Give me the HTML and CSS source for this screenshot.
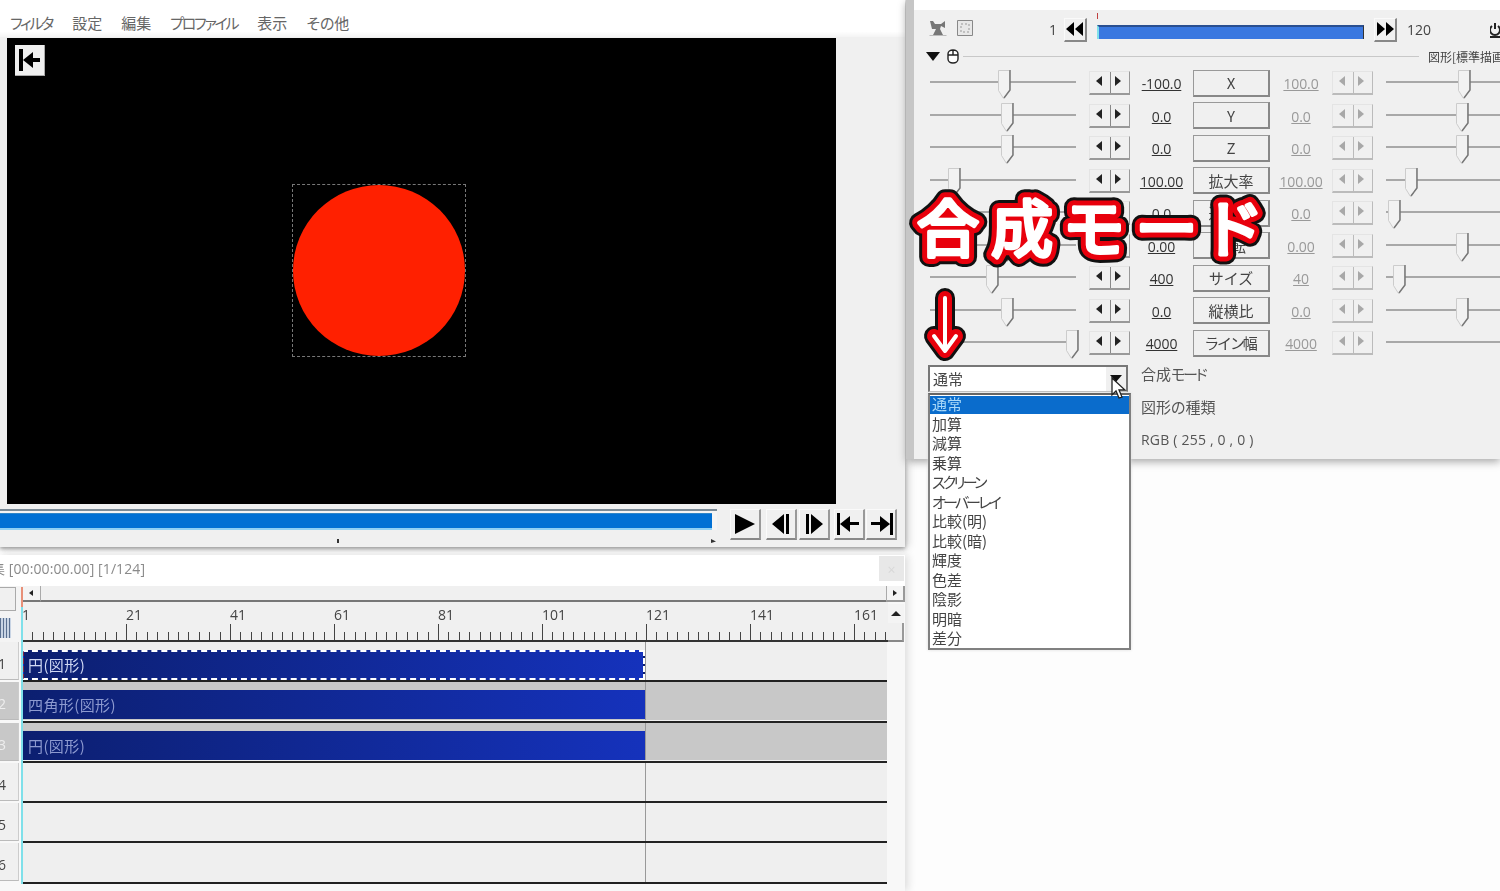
FILE: index.html
```html
<!DOCTYPE html>
<html lang="ja">
<head>
  <meta charset="UTF-8">
  <title>AviUtl 合成モード</title>
  <link rel="stylesheet" href="styles.css">
</head>
<body>
  <!-- main window -->
  <div class="main-win">
    <div class="menu">
      <span class="kana">フィルタ</span><span>設定</span><span>編集</span><span class="kana">プロファイル</span><span>表示</span><span>その他</span>
    </div>
    <div class="preview">
      <button class="jump-btn">
        <svg width="22" height="22" viewBox="0 0 22 22"><path d="M0 0h4v22H0zM4 11l10-8v6h7v4h-7v6z"/></svg>
      </button>
      <div class="select-box"><div class="circle"></div></div>
    </div>
    <div class="transport">
      <div class="seek"><div class="seek-fill"></div></div>
      <div class="play-btns">
        <button class="t-btn play"><svg width="22" height="22" viewBox="0 0 22 22"><path d="M1 1l20 10L1 21z"/></svg></button>
        <button class="t-btn"><svg width="22" height="22" viewBox="0 0 22 22"><path d="M14 1v20L2 11zM16 1h3v20h-3z"/></svg></button>
        <button class="t-btn"><svg width="22" height="22" viewBox="0 0 22 22"><path d="M8 1v20l12-10zM3 1h3v20H3z"/></svg></button>
        <button class="t-btn first"><svg width="24" height="22" viewBox="0 0 24 22"><path d="M0 0h3v22H0zM3 11l10-8v6h9v3h-9v7z"/></svg></button>
        <button class="t-btn last"><svg width="24" height="22" viewBox="0 0 24 22"><path d="M21 0h3v22h-3zM21 11L11 3v6H2v3h9v7z"/></svg></button>
      </div>
    </div>
    <i class="seek-mark mark-a"></i>
    <i class="seek-mark mark-b"></i>
  </div>

  <!-- timeline window -->
  <div class="tl-win">
    <div class="tl-title">
      <span class="tl-title-text">集 [00:00:00.00] [1/124]</span>
      <span class="tl-close">×</span>
    </div>
    <div class="tl-grid">
      <div class="corner">
        <div class="corner-btn"></div>
        <div class="corner-bars"></div>
      </div>
      <div class="hscroll">
        <div class="scroll-btn"><i class="tri-l"></i></div>
        <div class="hscroll-track"></div>
        <div class="scroll-btn end"><i class="tri-r"></i></div>
      </div>
      <div class="ruler">
        <div class="ruler-nums">
          <span>1</span><span>21</span><span>41</span><span>61</span><span>81</span><span>101</span><span>121</span><span>141</span><span>161</span>
        </div>
      </div>
      <div class="vscroll">
        <div class="vscroll-btn"><i class="tri-u"></i></div>
        <div class="vscroll-thumb"></div>
      </div>
      <div class="layers">
        <div class="layer">
          <div class="layer-num">1</div>
          <div class="track"><div class="clip selected">円(図形)</div></div>
        </div>
        <div class="layer off">
          <div class="layer-num">2</div>
          <div class="track"><div class="clip">四角形(図形)</div></div>
        </div>
        <div class="layer off">
          <div class="layer-num">3</div>
          <div class="track"><div class="clip">円(図形)</div></div>
        </div>
        <div class="layer">
          <div class="layer-num">4</div>
          <div class="track"></div>
        </div>
        <div class="layer">
          <div class="layer-num">5</div>
          <div class="track"></div>
        </div>
        <div class="layer">
          <div class="layer-num">6</div>
          <div class="track"></div>
        </div>
      </div>
      <i class="playhead"></i>
    </div>
  </div>

  <!-- settings window -->
  <div class="set-win">
    <div class="set-top"></div>
    <div class="set-frames">
      <div class="frame-icon">
        <svg width="18" height="18" viewBox="0 0 18 18"><path fill="#777" d="M1 2h3l2 3h6l4-3v7l-4-2-1 3 3 6H4l3-6H3z"/><path fill="none" stroke="#bbb" d="M.5 16.500h17"/></svg>
      </div>
      <div class="frame-icon second">
        <svg width="18" height="18" viewBox="0 0 18 18"><path fill="#e8e8e8" stroke="#888" d="M1.500 1.500h15v15h-15z"/><path fill="none" stroke="#999" stroke-dasharray="2 2" d="M5 5h8v8H5z"/></svg>
      </div>
      <span class="frame-no">1</span>
      <button class="frame-btn"><svg width="18" height="14" viewBox="0 0 18 14"><path d="M8 0v14L0 7zM17 0v14L9 7z"/></svg></button>
      <div class="frame-bar"><i class="frame-head"></i></div>
      <button class="frame-btn"><svg width="18" height="14" viewBox="0 0 18 14"><path d="M1 0v14l8-7zM10 0v14l8-7z"/></svg></button>
      <span class="frame-end">120</span>
      <svg class="power-icon" width="10" height="16" viewBox="0 0 10 16"><path fill="none" stroke="#222" stroke-width="2" d="M5 1v6M2 4a5 5 0 1 0 6 0M0 15h10"/></svg>
    </div>
    <div class="set-group">
      <i class="tri-down"></i>
      <svg class="mouse-icon" width="12" height="15" viewBox="0 0 12 15"><path fill="#fff" stroke="#222" stroke-width="1.400" d="M1 5a5 4 0 0 1 10 0v5a5 4 0 0 1-10 0zM1 6h10M6 1v5"/></svg>
      <div class="group-line"></div>
      <span class="group-label">図形[標準描画]</span>
    </div>

    <div class="params">
      <div class="param">
        <div class="slider"><i class="thumb" style="left:68px"></i></div>
        <div class="spin"><i class="tri-l"></i><i class="tri-r"></i></div>
        <span class="val">-100.0</span>
        <button class="name-btn">X</button>
        <span class="val end">100.0</span>
        <div class="spin off"><i class="tri-l"></i><i class="tri-r"></i></div>
        <div class="slider right"><i class="thumb" style="left:72px"></i></div>
      </div>
      <div class="param">
        <div class="slider"><i class="thumb" style="left:71px"></i></div>
        <div class="spin"><i class="tri-l"></i><i class="tri-r"></i></div>
        <span class="val">0.0</span>
        <button class="name-btn">Y</button>
        <span class="val end">0.0</span>
        <div class="spin off"><i class="tri-l"></i><i class="tri-r"></i></div>
        <div class="slider right"><i class="thumb" style="left:70px"></i></div>
      </div>
      <div class="param">
        <div class="slider"><i class="thumb" style="left:71px"></i></div>
        <div class="spin"><i class="tri-l"></i><i class="tri-r"></i></div>
        <span class="val">0.0</span>
        <button class="name-btn">Z</button>
        <span class="val end">0.0</span>
        <div class="spin off"><i class="tri-l"></i><i class="tri-r"></i></div>
        <div class="slider right"><i class="thumb" style="left:70px"></i></div>
      </div>
      <div class="param">
        <div class="slider"><i class="thumb" style="left:18px"></i></div>
        <div class="spin"><i class="tri-l"></i><i class="tri-r"></i></div>
        <span class="val">100.00</span>
        <button class="name-btn">拡大率</button>
        <span class="val end">100.00</span>
        <div class="spin off"><i class="tri-l"></i><i class="tri-r"></i></div>
        <div class="slider right"><i class="thumb" style="left:19px"></i></div>
      </div>
      <div class="param">
        <div class="slider"><i class="thumb" style="left:1px"></i></div>
        <div class="spin"><i class="tri-l"></i><i class="tri-r"></i></div>
        <span class="val">0.0</span>
        <button class="name-btn">透明度</button>
        <span class="val end">0.0</span>
        <div class="spin off"><i class="tri-l"></i><i class="tri-r"></i></div>
        <div class="slider right"><i class="thumb" style="left:2px"></i></div>
      </div>
      <div class="param">
        <div class="slider"><i class="thumb" style="left:71px"></i></div>
        <div class="spin"><i class="tri-l"></i><i class="tri-r"></i></div>
        <span class="val">0.00</span>
        <button class="name-btn">回転</button>
        <span class="val end">0.00</span>
        <div class="spin off"><i class="tri-l"></i><i class="tri-r"></i></div>
        <div class="slider right"><i class="thumb" style="left:70px"></i></div>
      </div>
      <div class="param">
        <div class="slider"><i class="thumb" style="left:56px"></i></div>
        <div class="spin"><i class="tri-l"></i><i class="tri-r"></i></div>
        <span class="val">400</span>
        <button class="name-btn">サイズ</button>
        <span class="val end">40</span>
        <div class="spin off"><i class="tri-l"></i><i class="tri-r"></i></div>
        <div class="slider right"><i class="thumb" style="left:7px"></i></div>
      </div>
      <div class="param">
        <div class="slider"><i class="thumb" style="left:71px"></i></div>
        <div class="spin"><i class="tri-l"></i><i class="tri-r"></i></div>
        <span class="val">0.0</span>
        <button class="name-btn">縦横比</button>
        <span class="val end">0.0</span>
        <div class="spin off"><i class="tri-l"></i><i class="tri-r"></i></div>
        <div class="slider right"><i class="thumb" style="left:70px"></i></div>
      </div>
      <div class="param">
        <div class="slider"><i class="thumb" style="left:136px"></i></div>
        <div class="spin"><i class="tri-l"></i><i class="tri-r"></i></div>
        <span class="val">4000</span>
        <button class="name-btn"><span class="kana">ライン</span>幅</button>
        <span class="val end">4000</span>
        <div class="spin off"><i class="tri-l"></i><i class="tri-r"></i></div>
        <div class="slider right"></div>
      </div>
    </div>

    <div class="combo-area">
      <div class="combo">
        <span>通常</span>
        <div class="combo-btn"><i class="tri-down small"></i></div>
      </div>
      <div class="combo-labels">
        <div>合成<span class="kana">モード</span></div>
        <div>図形の種類</div>
        <div class="rgb">RGB ( 255 , 0 , 0 )</div>
      </div>
    </div>
  </div>

  <!-- opened dropdown -->
  <ul class="drop-list">
    <li class="on">通常</li>
    <li>加算</li>
    <li>減算</li>
    <li>乗算</li>
    <li class="kana">スクリーン</li>
    <li class="kana">オーバーレイ</li>
    <li>比較(明)</li>
    <li>比較(暗)</li>
    <li>輝度</li>
    <li>色差</li>
    <li>陰影</li>
    <li>明暗</li>
    <li>差分</li>
  </ul>

  <svg class="cursor" width="18" height="24" viewBox="0 0 18 24"><path fill="#fff" stroke="#222" stroke-width="1.300" d="M1 1v17l4-4 3 7 3-1-3-7h6z"/></svg>

  <!-- annotation over the screenshot -->
  <svg class="note" width="400" height="190" viewBox="0 0 400 190">
    <defs>
      <text id="note-text" x="12" y="67" class="note-text">合成モード</text>
      <path id="note-arrow" d="M40 113v53M29 151l11 15 11-15"/>
    </defs>
    <use href="#note-text" class="s-black"/>
    <use href="#note-arrow" class="s-black"/>
    <use href="#note-text" class="s-red"/>
    <use href="#note-arrow" class="s-red"/>
    <use href="#note-text" class="s-white"/>
    <use href="#note-arrow" class="s-white"/>
  </svg>
</body>
</html>
```

FILE: styles.css
```css
* {
  box-sizing: border-box;
}
html, body {
  margin: 0;
  height: 100%;
}
body {
  position: relative;
  width: 1500px;
  height: 891px;
  overflow: hidden;
  background-color: #fdfdfd;
  font-family: "Noto Sans CJK JP", "Open Sans", sans-serif;
  font-feature-settings: "palt";
  font-size: 15px;
  color: #444;
  filter: blur(0.35px);
}
button {
  font-family: inherit;
  padding: 0;
}
i {
  display: block;
}
.kana {
  letter-spacing: -2.2px;
}

/* triangles */
.tri-l, .tri-r {
  width: 0;
  height: 0;
  border-top: 5px solid transparent;
  border-bottom: 5px solid transparent;
}
.tri-l {
  border-right: 6px solid #222;
}
.tri-r {
  border-left: 6px solid #222;
}
.tri-u {
  width: 0;
  height: 0;
  border-left: 5px solid transparent;
  border-right: 5px solid transparent;
  border-bottom: 5px solid #222;
}
.tri-down {
  flex: none;
  width: 0;
  height: 0;
  border-left: 7px solid transparent;
  border-right: 7px solid transparent;
  border-top: 9px solid #111;
}
.tri-down.small {
  border-left-width: 6px;
  border-right-width: 6px;
  border-top-width: 7px;
}

/* main window */
.main-win {
  position: absolute;
  left: 0;
  top: 0;
  width: 905px;
  height: 547px;
  background-color: #f0f0f0;
  box-shadow: 0 2px 4px #999, 3px 0 8px #ccc;
}
.menu {
  display: flex;
  gap: 19px;
  height: 37px;
  padding: 10px 0 0 10px;
  background-color: #fff;
  background-image: linear-gradient(to bottom, #fff 85%, #f4f4f4);
  color: #666;
  line-height: 26px;
}
.menu .kana {
  margin-right: 1px;
}
.preview {
  position: relative;
  display: flex;
  align-items: center;
  width: 829px;
  height: 466px;
  margin: 1px 0 0 7px;
  padding: 0 0 1px 285px;
  background-color: #000;
}
.jump-btn {
  position: absolute;
  left: 8px;
  top: 7px;
  display: flex;
  align-items: center;
  justify-content: center;
  width: 30px;
  height: 31px;
  background-color: #f0f0f0;
  border: 0;
  border-right: 1px solid #aaa;
  border-bottom: 1px solid #aaa;
}
.select-box {
  width: 174px;
  height: 173px;
  border: 1px dashed #777;
}
.circle {
  width: 172px;
  height: 171px;
  border-radius: 50%;
  background-color: #ff2000;
}
.transport {
  display: flex;
  margin-top: 5px;
}
.seek {
  width: 717px;
  height: 21px;
  padding: 2px 5px 2px 0;
  background-color: #f4f4f4;
  border-top: 2px solid #7a8a96;
}
.seek-fill {
  height: 17px;
  background-color: #0070d4;
  border-bottom: 2px solid #8fd0f4;
  border-top: 1px solid #2f86c8;
}
.play-btns {
  display: flex;
  gap: 2px;
  margin-left: 13px;
}
.t-btn {
  display: flex;
  align-items: center;
  justify-content: center;
  width: 31px;
  height: 31px;
  background-color: #f0f0f0;
  border: 1px solid #fafafa;
  border-right: 2px solid #999;
  border-bottom: 2px solid #888;
}
.t-btn.play {
  margin-right: 3px;
}
.t-btn.first {
  margin-left: 2px;
}
.t-btn.last {
  margin-left: -1px;
}
.seek-mark {
  position: absolute;
  top: 539px;
  width: 2px;
  height: 4px;
  background-color: #333;
}
.mark-a {
  left: 337px;
}
.mark-b {
  left: 711px;
  clip-path: polygon(0 0, 100% 60%, 0 100%);
  width: 5px;
}

/* timeline window */
.tl-win {
  position: absolute;
  left: 0;
  top: 555px;
  width: 905px;
  height: 336px;
  overflow: hidden;
  background-color: #f8f8f8;
  box-shadow: 3px 0 8px #ddd;
}
.tl-title {
  display: flex;
  justify-content: space-between;
  height: 31px;
  padding-right: 1px;
  background-color: #fff;
  color: #8a8a8a;
  line-height: 27px;
  font-family: "Open Sans", "Noto Sans CJK JP", sans-serif;
  font-size: 14px;
  letter-spacing: 0.1px;
}
.tl-title-text {
  margin-left: -9px;
}
.tl-close {
  width: 25px;
  height: 25px;
  margin-top: 1px;
  background-color: #e8e8e8;
  color: #d8d8d8;
  text-align: center;
}
.tl-grid {
  position: relative;
  display: grid;
  grid-template-columns: 22px 866px 17px;
  grid-template-rows: 16px 40px auto;
}
.corner {
  grid-column: 1;
  grid-row: 1 / 3;
  background-color: #f4f4f4;
}
.corner-btn {
  width: 16px;
  height: 24px;
  margin-top: 1px;
  background-color: #f0f0f0;
  border: 1px solid #aaa;
  border-left: 0;
}
.corner-bars {
  width: 11px;
  height: 20px;
  margin-top: 7px;
  background-image: repeating-linear-gradient(to right, #5a7090 0 1px, #c8d4e4 1px 3px);
}
.hscroll {
  grid-column: 2 / 4;
  grid-row: 1;
  display: flex;
  background-color: #f8f8f8;
}
.scroll-btn {
  display: flex;
  align-items: center;
  justify-content: center;
  width: 19px;
  background-color: #f4f4f4;
  border-right: 1px solid #aaa;
  border-bottom: 2px solid #777;
}
.scroll-btn.end {
  border-left: 1px solid #aaa;
  border-right: 2px solid #999;
  border-bottom: 2px solid #999;
}
.scroll-btn i {
  border-top-width: 3px;
  border-bottom-width: 3px;
  border-right-width: 4px;
  border-left-width: 4px;
}
.hscroll-track {
  flex: 1;
  background-color: #f0f0f0;
  border-bottom: 2px solid #777;
}
.ruler {
  grid-column: 2;
  grid-row: 2;
  width: 866px;
  overflow: hidden;
  background-color: #f0f0f0;
  background-image:
    linear-gradient(#333, #333),
    repeating-linear-gradient(to right, #444 0 1px, transparent 1px 104px),
    repeating-linear-gradient(to right, #444 0 1px, transparent 1px 10.4px);
  background-size: 100% 2px, 100% 16px, 100% 8px;
  background-position: 0 38px, 0 22px, 0 30px;
  background-repeat: no-repeat;
}
.ruler-nums {
  display: flex;
  padding-top: 3px;
  color: #444;
  font-family: "Open Sans", sans-serif;
  font-size: 14px;
  line-height: 20px;
}
.ruler-nums span {
  flex: 0 0 104px;
}
.vscroll {
  grid-column: 3;
  grid-row: 2 / 4;
  padding-top: 2px;
  margin-right: 1px;
}
.vscroll-btn {
  display: flex;
  align-items: center;
  justify-content: center;
  height: 19px;
  background-color: #f4f4f4;
}
.vscroll-thumb {
  height: 19px;
  background-color: #f0f0f0;
  border-right: 2px solid #999;
  border-bottom: 2px solid #888;
}
.layers {
  grid-column: 1 / 3;
  grid-row: 3;
}
.layer {
  display: flex;
  height: 40.3px;
}
.layer-num {
  width: 19px;
  height: 38px;
  margin-right: 3px;
  background-color: #f0f0f0;
  border-right: 1px solid #ccc;
  border-bottom: 1px solid #bbb;
  color: #444;
  font-family: "Open Sans", sans-serif;
  font-size: 14px;
  line-height: 43px;
  text-indent: -2px;
}
.off .layer-num {
  background-color: #c8c8c8;
  color: #eee;
}
.track {
  width: 865px;
  padding-top: 8px;
  background-color: #efefef;
  background-image: linear-gradient(#999, #999);
  background-size: 1px 100%;
  background-position: 623px 0;
  background-repeat: no-repeat;
  border-bottom: 2px solid #222;
}
.off .track {
  background-color: #c8c8c8;
  box-shadow: inset 0 -1px #f0f0f0;
}
.clip {
  width: 623px;
  height: 29px;
  padding-left: 6px;
  background-image: linear-gradient(to right, #0c1f70, #1532bc);
  color: #8d9ad0;
  letter-spacing: 0.4px;
  line-height: 30px;
}
.clip.selected {
  height: 30px;
  padding-left: 4px;
  border: 2px dashed #fff;
  border-left-color: #8a2a40;
  color: #d0d8f4;
  line-height: 26px;
}
.playhead {
  position: absolute;
  left: 21px;
  top: 1px;
  bottom: 0;
  width: 2px;
  background-image: linear-gradient(to bottom, #e89078 0 20px, #7fe0ea 20px);
}

/* settings window */
.set-win {
  position: absolute;
  left: 906px;
  top: 0;
  width: 594px;
  height: 459px;
  overflow: hidden;
  background-color: #f0f0f0;
  border-left: 8px solid #c6c6c6;
  box-shadow: 0 3px 8px #aaa;
}
.set-top {
  height: 10px;
  background-color: #fff;
}
.set-frames {
  display: flex;
  align-items: center;
  height: 36px;
  padding: 3px 0 0 15px;
}
.frame-icon.second {
  margin-left: 9px;
}
.frame-no {
  width: 10px;
  margin-left: 75px;
  font-family: "Open Sans", sans-serif;
  font-size: 14px;
}
.frame-btn {
  display: flex;
  align-items: center;
  justify-content: center;
  width: 23px;
  height: 24px;
  margin-left: 5px;
  background-color: #f0f0f0;
  border: 1px solid #fafafa;
  border-right: 2px solid #888;
  border-bottom: 2px solid #888;
}
.frame-bar {
  position: relative;
  width: 267px;
  height: 14px;
  margin: 5px 5px 0 10px;
  background-color: #3a78e0;
  border-top: 2px solid #2a4f90;
  border-right: 1px solid #333;
  border-left: 2px solid #7fe0ea;
}
.frame-head {
  position: absolute;
  left: -2px;
  top: -14px;
  width: 1px;
  height: 6px;
  background-color: #c04040;
}
.frame-end {
  margin-left: 10px;
  font-family: "Open Sans", sans-serif;
  font-size: 14px;
}
.power-icon {
  flex: none;
  margin-left: 59px;
}
.set-group {
  display: flex;
  align-items: center;
  height: 21px;
  padding-left: 12px;
}
.mouse-icon {
  flex: none;
  margin-left: 7px;
}
.group-line {
  flex: 0 0 456px;
  height: 1px;
  margin-left: 4px;
  background-color: #c8c8c8;
}
.group-label {
  flex: none;
  margin-left: 9px;
  font-size: 12px;
  white-space: nowrap;
}
.params {
  display: grid;
  grid-auto-rows: 32.5px;
}
.param {
  display: flex;
  align-items: center;
  padding-left: 16px;
}
.slider {
  position: relative;
  flex: 0 0 146px;
  height: 32px;
  background-image: linear-gradient(#a8a8a8, #a8a8a8);
  background-size: 100% 2px;
  background-position: 0 14px;
  background-repeat: no-repeat;
}
.slider.right {
  flex: 0 0 120px;
  margin-left: 13px;
}
.thumb {
  position: absolute;
  top: 3px;
  width: 13px;
  height: 29px;
  background: url("data:image/svg+xml,%3Csvg xmlns='http://www.w3.org/2000/svg' width='13' height='29'%3E%3Cpath d='M.5.5h11v20l-6 8-5-8z' fill='%23f2f2f2' stroke='%23ccc'/%3E%3Cpath d='M12 0v20l-6 8' fill='none' stroke='%23777' stroke-width='1.500'/%3E%3C/svg%3E") no-repeat;
}
.spin {
  display: flex;
  flex: 0 0 41px;
  height: 24px;
  margin-left: 13px;
  background-color: #f0f0f0;
  background-image: linear-gradient(#888, #888);
  background-size: 1px 100%;
  background-position: 20px 0;
  background-repeat: no-repeat;
  border: 1px solid #e4e4e4;
  border-right: 1px solid #999;
  border-bottom: 2px solid #999;
}
.spin.off {
  margin-left: 0;
  border-right-color: #bbb;
  border-bottom-color: #bbb;
  background-image: linear-gradient(#bbb, #bbb);
}
.spin i {
  margin: 4px 0 0 6px;
}
.spin .tri-r {
  margin-left: 13px;
}
.spin.off .tri-l {
  border-right-color: #a8a8a8;
}
.spin.off .tri-r {
  border-left-color: #a8a8a8;
}
.val {
  width: 63px;
  padding-top: 1px;
  color: #333;
  font-family: "Open Sans", sans-serif;
  font-size: 14px;
  letter-spacing: -0.1px;
  text-align: center;
  text-decoration: underline;
}
.val.end {
  width: 62px;
  color: #999;
}
.name-btn {
  flex: 0 0 77px;
  height: 27px;
  background-color: #f0f0f0;
  border: 1px solid #999;
  border-right: 2px solid #888;
  border-bottom: 2px solid #888;
  color: #444;
  font-size: 15px;
}
.combo-area {
  display: flex;
  padding-left: 14px;
}
.combo {
  display: flex;
  justify-content: space-between;
  width: 200px;
  height: 27px;
  margin-top: 5px;
  padding-left: 3px;
  background-color: #fff;
  border: 2px solid #777;
  border-bottom: 1px solid #bbb;
  line-height: 23px;
}
.combo-btn {
  display: flex;
  align-items: center;
  justify-content: center;
  width: 20px;
  background-color: #f0f0f0;
}
.combo-labels {
  margin-left: 13px;
  color: #555;
}
.combo-labels div {
  height: 33px;
  line-height: 27px;
}
.combo-labels .rgb {
  font-family: "Open Sans", sans-serif;
  font-size: 14px;
  letter-spacing: 0.2px;
}

/* dropdown, cursor and annotation lie over the windows */
.drop-list {
  position: absolute;
  left: 928px;
  top: 393px;
  width: 203px;
  height: 257px;
  margin: 0;
  padding: 1px 0 0;
  list-style: none;
  background-color: #fff;
  border: 2px solid #808080;
  border-top-color: #666;
  color: #444;
  box-shadow: 0 0 3px #ddd;
}
.drop-list li {
  height: 19.5px;
  padding-left: 2px;
  line-height: 16px;
}
.drop-list li.kana {
  letter-spacing: -2.8px;
}
.drop-list li.on {
  background-image: linear-gradient(#0a6ccc, #0a6ccc);
  background-size: 100% 18px;
  background-repeat: no-repeat;
  color: #a8d8f8;
}
.cursor {
  position: absolute;
  left: 1111px;
  top: 377px;
}
.note {
  position: absolute;
  left: 905px;
  top: 185px;
}
.note-text {
  font-family: "Noto Sans CJK JP", sans-serif;
  font-size: 62px;
  font-weight: 400;
  letter-spacing: 12px;
}
.note use {
  fill: none;
  stroke-linejoin: round;
  stroke-linecap: round;
}
.s-black {
  stroke: #111;
  stroke-width: 20px;
}
.s-red {
  stroke: #e8000c;
  stroke-width: 14px;
}
.s-white {
  stroke: #fff;
  stroke-width: 4px;
}
use[href="#note-text"].s-white {
  fill: #fff;
}
```
